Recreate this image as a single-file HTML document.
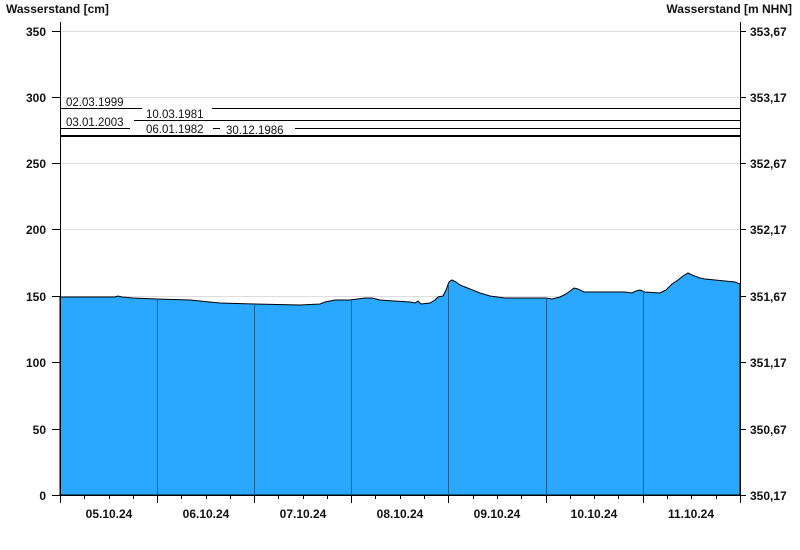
<!DOCTYPE html>
<html><head><meta charset="utf-8"><style>
html,body{margin:0;padding:0;background:#fff;}
svg{display:block;font-family:"Liberation Sans",Arial,sans-serif;}
.b{font-weight:bold;font-size:12px;fill:#111;}
.s{font-size:11.5px;fill:#111;}
</style></head><body>
<svg width="800" height="550" viewBox="0 0 800 550" xmlns="http://www.w3.org/2000/svg">
<text x="6" y="13" class="b">Wasserstand [cm]</text>
<text x="792" y="13" class="b" text-anchor="end">Wasserstand [m NHN]</text>
<g stroke="#dddddd" stroke-width="1">
<line x1="60" y1="31.5" x2="740" y2="31.5"/>
<line x1="60" y1="97.5" x2="740" y2="97.5"/>
<line x1="60" y1="163.5" x2="740" y2="163.5"/>
<line x1="60" y1="229.5" x2="740" y2="229.5"/>
<line x1="60" y1="296.5" x2="740" y2="296.5"/>
<line x1="60" y1="362.5" x2="740" y2="362.5"/>
<line x1="60" y1="429.5" x2="740" y2="429.5"/>
</g>
<polygon fill="#2aa8ff" stroke="#000" stroke-width="1" points="60,495 60,297 115,297 118,296 122,297 133,298 157,299 190,300 220,303 254,304 300,305 320,304 325,302 335,300 350,300 365,298 372,298 380,300 410,302 415,303 418,301 421,304 430,303 435,300 438,297 443,296 446,290 449,282 452,280 456,282 460,285 470,289 480,293 490,296 505,298 520,298 546,298 552,299 560,297 566,294 570,291 574,288 578,289 584,292 600,292 625,292 632,293 636,291 640,290 645,292 660,293 666,290 672,284 678,280 683,276 688,273 692,275 700,278 705,279 715,280 725,281 735,282 740,284 740,495"/>
<g stroke="#1b5f8c" stroke-width="1">
<line x1="157.5" y1="299" x2="157.5" y2="495"/>
<line x1="254.5" y1="304" x2="254.5" y2="495"/>
<line x1="351.5" y1="300" x2="351.5" y2="495"/>
<line x1="448.5" y1="284" x2="448.5" y2="495"/>
<line x1="546.5" y1="298" x2="546.5" y2="495"/>
<line x1="643.5" y1="291" x2="643.5" y2="495"/>
</g>
<!-- historic lines -->
<g stroke="#000">
<line x1="60" y1="108.5" x2="142" y2="108.5"/>
<line x1="212" y1="108.5" x2="740" y2="108.5"/>
<line x1="134" y1="120.5" x2="740" y2="120.5"/>
<line x1="60" y1="128.5" x2="130" y2="128.5"/>
<line x1="213" y1="128.5" x2="220" y2="128.5"/>
<line x1="295" y1="128.5" x2="740" y2="128.5"/>
<line x1="60" y1="136" x2="740" y2="136" stroke-width="2"/>
</g>
<text x="66" y="106" class="s">02.03.1999</text>
<text x="146" y="118" class="s">10.03.1981</text>
<text x="66" y="126" class="s">03.01.2003</text>
<text x="146" y="133" class="s">06.01.1982</text>
<text x="226" y="134" class="s">30.12.1986</text>
<!-- axes -->
<g stroke="#000" stroke-width="1">
<line x1="60.5" y1="22" x2="60.5" y2="495"/>
<line x1="740.5" y1="22" x2="740.5" y2="495"/>
<line x1="52" y1="495.5" x2="746" y2="495.5"/>
<line x1="52" y1="31.5" x2="60" y2="31.5"/><line x1="52" y1="97.5" x2="60" y2="97.5"/>
<line x1="52" y1="163.5" x2="60" y2="163.5"/><line x1="52" y1="229.5" x2="60" y2="229.5"/>
<line x1="52" y1="296.5" x2="60" y2="296.5"/><line x1="52" y1="362.5" x2="60" y2="362.5"/>
<line x1="52" y1="429.5" x2="60" y2="429.5"/>
<line x1="740" y1="31.5" x2="746" y2="31.5"/><line x1="740" y1="97.5" x2="746" y2="97.5"/>
<line x1="740" y1="163.5" x2="746" y2="163.5"/><line x1="740" y1="229.5" x2="746" y2="229.5"/>
<line x1="740" y1="296.5" x2="746" y2="296.5"/><line x1="740" y1="362.5" x2="746" y2="362.5"/>
<line x1="740" y1="429.5" x2="746" y2="429.5"/>
<line x1="60.5" y1="495" x2="60.5" y2="503"/><line x1="157.5" y1="495" x2="157.5" y2="503"/>
<line x1="254.5" y1="495" x2="254.5" y2="503"/><line x1="351.5" y1="495" x2="351.5" y2="503"/>
<line x1="448.5" y1="495" x2="448.5" y2="503"/><line x1="546.5" y1="495" x2="546.5" y2="503"/>
<line x1="643.5" y1="495" x2="643.5" y2="503"/><line x1="740.5" y1="495" x2="740.5" y2="503"/>
<line x1="84.5" y1="495" x2="84.5" y2="499"/><line x1="109.5" y1="495" x2="109.5" y2="499"/><line x1="133.5" y1="495" x2="133.5" y2="499"/>
<line x1="181.5" y1="495" x2="181.5" y2="499"/><line x1="206.5" y1="495" x2="206.5" y2="499"/><line x1="230.5" y1="495" x2="230.5" y2="499"/>
<line x1="278.5" y1="495" x2="278.5" y2="499"/><line x1="303.5" y1="495" x2="303.5" y2="499"/><line x1="327.5" y1="495" x2="327.5" y2="499"/>
<line x1="375.5" y1="495" x2="375.5" y2="499"/><line x1="400.5" y1="495" x2="400.5" y2="499"/><line x1="424.5" y1="495" x2="424.5" y2="499"/>
<line x1="473.5" y1="495" x2="473.5" y2="499"/><line x1="497.5" y1="495" x2="497.5" y2="499"/><line x1="521.5" y1="495" x2="521.5" y2="499"/>
<line x1="570.5" y1="495" x2="570.5" y2="499"/><line x1="594.5" y1="495" x2="594.5" y2="499"/><line x1="618.5" y1="495" x2="618.5" y2="499"/>
<line x1="667.5" y1="495" x2="667.5" y2="499"/><line x1="691.5" y1="495" x2="691.5" y2="499"/><line x1="716.5" y1="495" x2="716.5" y2="499"/>
</g>
<g class="b" text-anchor="end">
<text x="46" y="36">350</text><text x="46" y="102">300</text><text x="46" y="168">250</text>
<text x="46" y="234">200</text><text x="46" y="301">150</text><text x="46" y="367">100</text>
<text x="46" y="434">50</text><text x="46" y="500">0</text>
</g>
<g class="b">
<text x="750" y="36">353,67</text><text x="750" y="102">353,17</text><text x="750" y="168">352,67</text>
<text x="750" y="234">352,17</text><text x="750" y="301">351,67</text><text x="750" y="367">351,17</text>
<text x="750" y="434">350,67</text><text x="750" y="500">350,17</text>
</g>
<g class="b" text-anchor="middle">
<text x="109" y="518">05.10.24</text><text x="206" y="518">06.10.24</text><text x="303" y="518">07.10.24</text>
<text x="400" y="518">08.10.24</text><text x="497" y="518">09.10.24</text><text x="594" y="518">10.10.24</text>
<text x="691" y="518">11.10.24</text>
</g>
</svg>
</body></html>
